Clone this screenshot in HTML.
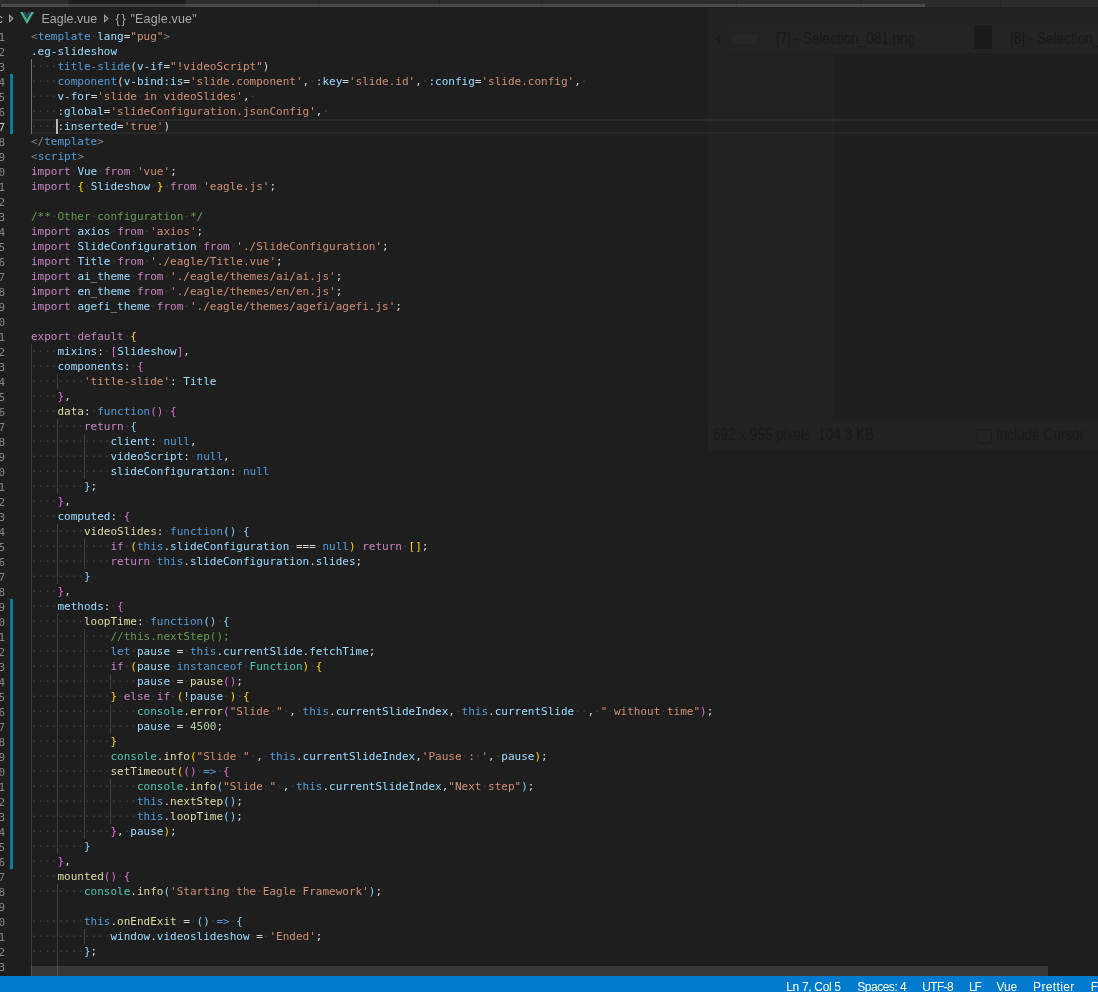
<!DOCTYPE html>
<html><head><meta charset="utf-8"><title>Eagle.vue</title><style>
html,body{margin:0;padding:0;background:#1e1e1e;}
body{width:1098px;height:992px;position:relative;overflow:hidden;font-family:"DejaVu Sans Mono","Liberation Mono",monospace;font-size:11px;line-height:15px;color:#d4d4d4;}
#root{position:absolute;left:0;top:0;width:1098px;height:992px;overflow:hidden;will-change:transform;}
.cl{position:absolute;left:31px;height:15px;white-space:pre;}
.cl i{font-style:normal;color:rgba(227,228,226,0.16);}
.ln{position:absolute;left:-41.5px;width:46.5px;text-align:right;color:#858585;height:15px;margin-top:1px;}
.ln.act{color:#c6c6c6;}
.ig{position:absolute;width:1px;background:#404040;}
.ig.ia{background:#707070;}
.mod{position:absolute;left:10px;width:3px;background:#0c7d9d;}
.k{color:#c586c0}.b{color:#569cd6}.s{color:#ce9178}.c{color:#6a9955}.v{color:#9cdcfe}.f{color:#dcdcaa}.n{color:#b5cea8}.t{color:#4ec9b0}.g{color:#808080}
.p1{color:#ffd700}.p2{color:#da70d6}.p3{color:#87cefa}
#tabs{position:absolute;left:0;top:0;width:1098px;height:7px;background:#2d2d2d;}
#tabs b{position:absolute;top:0;height:7px;}
#tscroll{position:absolute;left:1px;top:4px;width:924px;height:3px;background:rgba(121,121,121,0.4);}
#bc{position:absolute;left:0;top:10px;width:300px;height:17px;line-height:17px;font-family:"Liberation Sans",sans-serif;font-size:12.5px;color:#a9a9a9;white-space:pre;}
#bc span{position:absolute;top:0.5px;}
#bc svg{position:absolute;}
#curline{position:absolute;left:32px;top:119px;width:1066px;height:15px;box-sizing:border-box;border-top:2px solid #282828;border-bottom:2px solid #282828;}
#cursor{position:absolute;left:56px;top:119px;width:2px;height:15px;background:#bababa;}
#hscroll{position:absolute;left:31px;top:966px;width:1017px;height:10px;background:rgba(121,121,121,0.28);}
#status{position:absolute;left:0;top:976px;width:1098px;height:16px;background:#007acc;color:#fff;font-family:"Liberation Sans",sans-serif;font-size:12px;line-height:20px;white-space:pre;}
#status span{position:absolute;top:1px;}
#ghost{position:absolute;left:708px;top:7px;width:390px;height:443px;background:#212121;font-family:"Liberation Sans",sans-serif;color:#2b2b2b;white-space:pre;overflow:hidden;}
#ghost div,#ghost span{position:absolute;}
.gt{font-size:16.5px;line-height:20px;color:#1a1a1a;transform:scaleX(0.82);transform-origin:0 50%;}
</style></head><body><div id="root">
<div id="ghost">
<div style="left:20px;top:17px;width:370px;height:29px;background:#232323"></div>
<div style="left:126px;top:46px;width:264px;height:368px;background:#1f1f1f"></div>
<div style="left:0;top:414px;width:390px;height:29px;background:#222222"></div>
<div style="left:24px;top:27px;width:25px;height:10px;background:#272727"></div>
<div style="left:266px;top:18px;width:18px;height:24px;background:#1a1a1a"></div>
<span class="gt" style="left:8px;top:20px;font-size:20px">&lsaquo;</span>
<span class="gt" style="left:67.5px;top:21px">[7] - Selection_081.png</span>
<span class="gt" style="left:302px;top:21px">[8] - Selection_082.png</span>
<span class="gt" style="left:4.7px;top:417px">692 x 955 pixels  104,3 KB</span>
<div style="left:269px;top:422px;width:13px;height:13px;border:1px solid #1b1b1b;border-radius:2px"></div>
<span class="gt" style="left:288.4px;top:417px">Include Cursor</span>
</div>
<div id="tabs"><b style="left:68px;width:1px;background:#252526"></b><b style="left:69px;width:117px;background:#1e1e1e"></b><b style="left:318px;width:1px;background:#252526"></b><b style="left:439px;width:1px;background:#252526"></b><b style="left:541px;width:1px;background:#252526"></b><b style="left:736px;width:1px;background:#252526"></b><b style="left:860px;width:1px;background:#252526"></b><b style="left:1000px;width:1px;background:#252526"></b></div>
<div id="tscroll"></div>
<div id="bc"><span style="left:-3.4px">c</span><svg style="left:8px;top:3px" width="7" height="11" viewBox="0 0 7 11"><path d="M1.6 2.4 L4.8 5.5 L1.6 8.6 Z" fill="none" stroke="#a0a0a0" stroke-width="1.2"/></svg><svg style="left:20px;top:2px" width="14" height="12" viewBox="0 0 14 12"><path d="M0 0 L7 12 L14 0 L11.2 0 L7 7.2 L2.8 0 Z" fill="#41b883"/><path d="M2.8 0 L7 7.2 L11.2 0 L8.6 0 L7 2.8 L5.4 0 Z" fill="#35495e"/></svg><span style="left:41.5px">Eagle.vue</span><svg style="left:102.5px;top:3px" width="7" height="11" viewBox="0 0 7 11"><path d="M1.6 2.4 L4.8 5.5 L1.6 8.6 Z" fill="none" stroke="#a0a0a0" stroke-width="1.2"/></svg><span style="left:115.5px;letter-spacing:1.9px">{}</span><span style="left:130.5px;letter-spacing:0.17px">"Eagle.vue"</span></div>
<div id="curline"></div>
<div class="ig ia" style="left:31px;top:59px;height:75px"></div>
<div class="ig" style="left:31px;top:344px;height:645px"></div>
<div class="ig" style="left:57px;top:374px;height:15px"></div>
<div class="ig" style="left:57px;top:419px;height:75px"></div>
<div class="ig" style="left:57px;top:524px;height:60px"></div>
<div class="ig" style="left:57px;top:614px;height:240px"></div>
<div class="ig" style="left:57px;top:884px;height:105px"></div>
<div class="ig" style="left:84px;top:434px;height:45px"></div>
<div class="ig" style="left:84px;top:539px;height:30px"></div>
<div class="ig" style="left:84px;top:629px;height:210px"></div>
<div class="ig" style="left:84px;top:929px;height:15px"></div>
<div class="ig" style="left:110px;top:674px;height:15px"></div>
<div class="ig" style="left:110px;top:704px;height:30px"></div>
<div class="ig" style="left:110px;top:779px;height:45px"></div>
<div class="mod" style="top:74px;height:60px"></div>
<div class="mod" style="top:599px;height:270px"></div>
<div class="ln" style="top:29px">1</div>
<div class="cl" style="top:29px"><span class="g">&lt;</span><span class="b">template</span><i>·</i><span class="v">lang</span>=<span class="s">"pug"</span><span class="g">&gt;</span></div>
<div class="ln" style="top:44px">2</div>
<div class="cl" style="top:44px"><span class="v">.eg-slideshow</span></div>
<div class="ln" style="top:59px">3</div>
<div class="cl" style="top:59px"><i>····</i><span class="b">title-slide</span>(<span class="v">v-if</span>=<span class="s">"!videoScript"</span>)</div>
<div class="ln" style="top:74px">4</div>
<div class="cl" style="top:74px"><i>····</i><span class="b">component</span>(<span class="v">v-bind:is</span>=<span class="s">'slide.component'</span>,<i>·</i><span class="v">:key</span>=<span class="s">'slide.id'</span>,<i>·</i><span class="v">:config</span>=<span class="s">'slide.config'</span>,<i>·</i></div>
<div class="ln" style="top:89px">5</div>
<div class="cl" style="top:89px"><i>····</i><span class="v">v-for</span>=<span class="s">'slide<i>·</i>in<i>·</i>videoSlides'</span>,<i>·</i></div>
<div class="ln" style="top:104px">6</div>
<div class="cl" style="top:104px"><i>····</i><span class="v">:global</span>=<span class="s">'slideConfiguration.jsonConfig'</span>,<i>·</i></div>
<div class="ln act" style="top:119px">7</div>
<div class="cl" style="top:119px"><i>····</i><span class="v">:inserted</span>=<span class="s">'true'</span>)</div>
<div class="ln" style="top:134px">8</div>
<div class="cl" style="top:134px"><span class="g">&lt;/</span><span class="b">template</span><span class="g">&gt;</span></div>
<div class="ln" style="top:149px">9</div>
<div class="cl" style="top:149px"><span class="g">&lt;</span><span class="b">script</span><span class="g">&gt;</span></div>
<div class="ln" style="top:164px">0</div>
<div class="cl" style="top:164px"><span class="k">import</span><i>·</i><span class="v">Vue</span><i>·</i><span class="k">from</span><i>·</i><span class="s">'vue'</span>;</div>
<div class="ln" style="top:179px">1</div>
<div class="cl" style="top:179px"><span class="k">import</span><i>·</i><span class="p1">{</span><i>·</i><span class="v">Slideshow</span><i>·</i><span class="p1">}</span><i>·</i><span class="k">from</span><i>·</i><span class="s">'eagle.js'</span>;</div>
<div class="ln" style="top:194px">2</div>
<div class="ln" style="top:209px">3</div>
<div class="cl" style="top:209px"><span class="c">/**<i>·</i>Other<i>·</i>configuration<i>·</i>*/</span></div>
<div class="ln" style="top:224px">4</div>
<div class="cl" style="top:224px"><span class="k">import</span><i>·</i><span class="v">axios</span><i>·</i><span class="k">from</span><i>·</i><span class="s">'axios'</span>;</div>
<div class="ln" style="top:239px">5</div>
<div class="cl" style="top:239px"><span class="k">import</span><i>·</i><span class="v">SlideConfiguration</span><i>·</i><span class="k">from</span><i>·</i><span class="s">'./SlideConfiguration'</span>;</div>
<div class="ln" style="top:254px">6</div>
<div class="cl" style="top:254px"><span class="k">import</span><i>·</i><span class="v">Title</span><i>·</i><span class="k">from</span><i>·</i><span class="s">'./eagle/Title.vue'</span>;</div>
<div class="ln" style="top:269px">7</div>
<div class="cl" style="top:269px"><span class="k">import</span><i>·</i><span class="v">ai_theme</span><i>·</i><span class="k">from</span><i>·</i><span class="s">'./eagle/themes/ai/ai.js'</span>;</div>
<div class="ln" style="top:284px">8</div>
<div class="cl" style="top:284px"><span class="k">import</span><i>·</i><span class="v">en_theme</span><i>·</i><span class="k">from</span><i>·</i><span class="s">'./eagle/themes/en/en.js'</span>;</div>
<div class="ln" style="top:299px">9</div>
<div class="cl" style="top:299px"><span class="k">import</span><i>·</i><span class="v">agefi_theme</span><i>·</i><span class="k">from</span><i>·</i><span class="s">'./eagle/themes/agefi/agefi.js'</span>;</div>
<div class="ln" style="top:314px">0</div>
<div class="ln" style="top:329px">1</div>
<div class="cl" style="top:329px"><span class="k">export</span><i>·</i><span class="k">default</span><i>·</i><span class="p1">{</span></div>
<div class="ln" style="top:344px">2</div>
<div class="cl" style="top:344px"><i>····</i><span class="v">mixins</span>:<i>·</i><span class="p2">[</span><span class="v">Slideshow</span><span class="p2">]</span>,</div>
<div class="ln" style="top:359px">3</div>
<div class="cl" style="top:359px"><i>····</i><span class="v">components</span>:<i>·</i><span class="p2">{</span></div>
<div class="ln" style="top:374px">4</div>
<div class="cl" style="top:374px"><i>········</i><span class="s">'title-slide'</span>:<i>·</i><span class="v">Title</span></div>
<div class="ln" style="top:389px">5</div>
<div class="cl" style="top:389px"><i>····</i><span class="p2">}</span>,</div>
<div class="ln" style="top:404px">6</div>
<div class="cl" style="top:404px"><i>····</i><span class="f">data</span>:<i>·</i><span class="b">function</span><span class="p2">()</span><i>·</i><span class="p2">{</span></div>
<div class="ln" style="top:419px">7</div>
<div class="cl" style="top:419px"><i>········</i><span class="k">return</span><i>·</i><span class="p3">{</span></div>
<div class="ln" style="top:434px">8</div>
<div class="cl" style="top:434px"><i>············</i><span class="v">client</span>:<i>·</i><span class="b">null</span>,</div>
<div class="ln" style="top:449px">9</div>
<div class="cl" style="top:449px"><i>············</i><span class="v">videoScript</span>:<i>·</i><span class="b">null</span>,</div>
<div class="ln" style="top:464px">0</div>
<div class="cl" style="top:464px"><i>············</i><span class="v">slideConfiguration</span>:<i>·</i><span class="b">null</span></div>
<div class="ln" style="top:479px">1</div>
<div class="cl" style="top:479px"><i>········</i><span class="p3">}</span>;</div>
<div class="ln" style="top:494px">2</div>
<div class="cl" style="top:494px"><i>····</i><span class="p2">}</span>,</div>
<div class="ln" style="top:509px">3</div>
<div class="cl" style="top:509px"><i>····</i><span class="v">computed</span>:<i>·</i><span class="p2">{</span></div>
<div class="ln" style="top:524px">4</div>
<div class="cl" style="top:524px"><i>········</i><span class="f">videoSlides</span>:<i>·</i><span class="b">function</span><span class="p3">()</span><i>·</i><span class="p3">{</span></div>
<div class="ln" style="top:539px">5</div>
<div class="cl" style="top:539px"><i>············</i><span class="k">if</span><i>·</i><span class="p1">(</span><span class="b">this</span>.<span class="v">slideConfiguration</span><i>·</i>===<i>·</i><span class="b">null</span><span class="p1">)</span><i>·</i><span class="k">return</span><i>·</i><span class="p1">[]</span>;</div>
<div class="ln" style="top:554px">6</div>
<div class="cl" style="top:554px"><i>············</i><span class="k">return</span><i>·</i><span class="b">this</span>.<span class="v">slideConfiguration</span>.<span class="v">slides</span>;</div>
<div class="ln" style="top:569px">7</div>
<div class="cl" style="top:569px"><i>········</i><span class="p3">}</span></div>
<div class="ln" style="top:584px">8</div>
<div class="cl" style="top:584px"><i>····</i><span class="p2">}</span>,</div>
<div class="ln" style="top:599px">9</div>
<div class="cl" style="top:599px"><i>····</i><span class="v">methods</span>:<i>·</i><span class="p2">{</span></div>
<div class="ln" style="top:614px">0</div>
<div class="cl" style="top:614px"><i>········</i><span class="f">loopTime</span>:<i>·</i><span class="b">function</span><span class="p3">()</span><i>·</i><span class="p3">{</span></div>
<div class="ln" style="top:629px">1</div>
<div class="cl" style="top:629px"><i>············</i><span class="c">//this.nextStep();</span></div>
<div class="ln" style="top:644px">2</div>
<div class="cl" style="top:644px"><i>············</i><span class="b">let</span><i>·</i><span class="v">pause</span><i>·</i>=<i>·</i><span class="b">this</span>.<span class="v">currentSlide</span>.<span class="v">fetchTime</span>;</div>
<div class="ln" style="top:659px">3</div>
<div class="cl" style="top:659px"><i>············</i><span class="k">if</span><i>·</i><span class="p1">(</span><span class="v">pause</span><i>·</i><span class="b">instanceof</span><i>·</i><span class="t">Function</span><span class="p1">)</span><i>·</i><span class="p1">{</span></div>
<div class="ln" style="top:674px">4</div>
<div class="cl" style="top:674px"><i>················</i><span class="v">pause</span><i>·</i>=<i>·</i><span class="f">pause</span><span class="p2">()</span>;</div>
<div class="ln" style="top:689px">5</div>
<div class="cl" style="top:689px"><i>············</i><span class="p1">}</span><i>·</i><span class="k">else</span><i>·</i><span class="k">if</span><i>·</i><span class="p1">(</span>!<span class="v">pause</span><i>·</i><span class="p1">)</span><i>·</i><span class="p1">{</span></div>
<div class="ln" style="top:704px">6</div>
<div class="cl" style="top:704px"><i>················</i><span class="t">console</span>.<span class="f">error</span><span class="p2">(</span><span class="s">"Slide<i>·</i>"</span><i>·</i>,<i>·</i><span class="b">this</span>.<span class="v">currentSlideIndex</span>,<i>·</i><span class="b">this</span>.<span class="v">currentSlide</span><i>··</i>,<i>·</i><span class="s">"<i>·</i>without<i>·</i>time"</span><span class="p2">)</span>;</div>
<div class="ln" style="top:719px">7</div>
<div class="cl" style="top:719px"><i>················</i><span class="v">pause</span><i>·</i>=<i>·</i><span class="n">4500</span>;</div>
<div class="ln" style="top:734px">8</div>
<div class="cl" style="top:734px"><i>············</i><span class="p1">}</span></div>
<div class="ln" style="top:749px">9</div>
<div class="cl" style="top:749px"><i>············</i><span class="t">console</span>.<span class="f">info</span><span class="p1">(</span><span class="s">"Slide<i>·</i>"</span><i>·</i>,<i>·</i><span class="b">this</span>.<span class="v">currentSlideIndex</span>,<span class="s">'Pause<i>·</i>:<i>·</i>'</span>,<i>·</i><span class="v">pause</span><span class="p1">)</span>;</div>
<div class="ln" style="top:764px">0</div>
<div class="cl" style="top:764px"><i>············</i><span class="f">setTimeout</span><span class="p1">(</span><span class="p2">()</span><i>·</i><span class="b">=&gt;</span><i>·</i><span class="p2">{</span></div>
<div class="ln" style="top:779px">1</div>
<div class="cl" style="top:779px"><i>················</i><span class="t">console</span>.<span class="f">info</span><span class="p3">(</span><span class="s">"Slide<i>·</i>"</span><i>·</i>,<i>·</i><span class="b">this</span>.<span class="v">currentSlideIndex</span>,<span class="s">"Next<i>·</i>step"</span><span class="p3">)</span>;</div>
<div class="ln" style="top:794px">2</div>
<div class="cl" style="top:794px"><i>················</i><span class="b">this</span>.<span class="f">nextStep</span><span class="p3">()</span>;</div>
<div class="ln" style="top:809px">3</div>
<div class="cl" style="top:809px"><i>················</i><span class="b">this</span>.<span class="f">loopTime</span><span class="p3">()</span>;</div>
<div class="ln" style="top:824px">4</div>
<div class="cl" style="top:824px"><i>············</i><span class="p2">}</span>,<i>·</i><span class="v">pause</span><span class="p1">)</span>;</div>
<div class="ln" style="top:839px">5</div>
<div class="cl" style="top:839px"><i>········</i><span class="p3">}</span></div>
<div class="ln" style="top:854px">6</div>
<div class="cl" style="top:854px"><i>····</i><span class="p2">}</span>,</div>
<div class="ln" style="top:869px">7</div>
<div class="cl" style="top:869px"><i>····</i><span class="f">mounted</span><span class="p2">()</span><i>·</i><span class="p2">{</span></div>
<div class="ln" style="top:884px">8</div>
<div class="cl" style="top:884px"><i>········</i><span class="t">console</span>.<span class="f">info</span><span class="p3">(</span><span class="s">'Starting<i>·</i>the<i>·</i>Eagle<i>·</i>Framework'</span><span class="p3">)</span>;</div>
<div class="ln" style="top:899px">9</div>
<div class="ln" style="top:914px">0</div>
<div class="cl" style="top:914px"><i>········</i><span class="b">this</span>.<span class="f">onEndExit</span><i>·</i>=<i>·</i><span class="p3">()</span><i>·</i><span class="b">=&gt;</span><i>·</i><span class="p3">{</span></div>
<div class="ln" style="top:929px">1</div>
<div class="cl" style="top:929px"><i>············</i><span class="v">window</span>.<span class="v">videoslideshow</span><i>·</i>=<i>·</i><span class="s">'Ended'</span>;</div>
<div class="ln" style="top:944px">2</div>
<div class="cl" style="top:944px"><i>········</i><span class="p3">}</span>;</div>
<div class="ln" style="top:959px">3</div>
<div id="cursor"></div>
<div id="hscroll"></div>
<div id="status"><span style="left:786.2px;letter-spacing:-0.32px">Ln 7, Col 5</span><span style="left:857.3px;letter-spacing:-0.49px">Spaces: 4</span><span style="left:922.3px;letter-spacing:-0.68px">UTF-8</span><span style="left:969px;letter-spacing:-1.1px">LF</span><span style="left:996.5px;letter-spacing:-0.17px">Vue</span><span style="left:1033px;letter-spacing:0.38px">Prettier</span><span style="left:1090.8px">Fo</span></div>
</div></body></html>
